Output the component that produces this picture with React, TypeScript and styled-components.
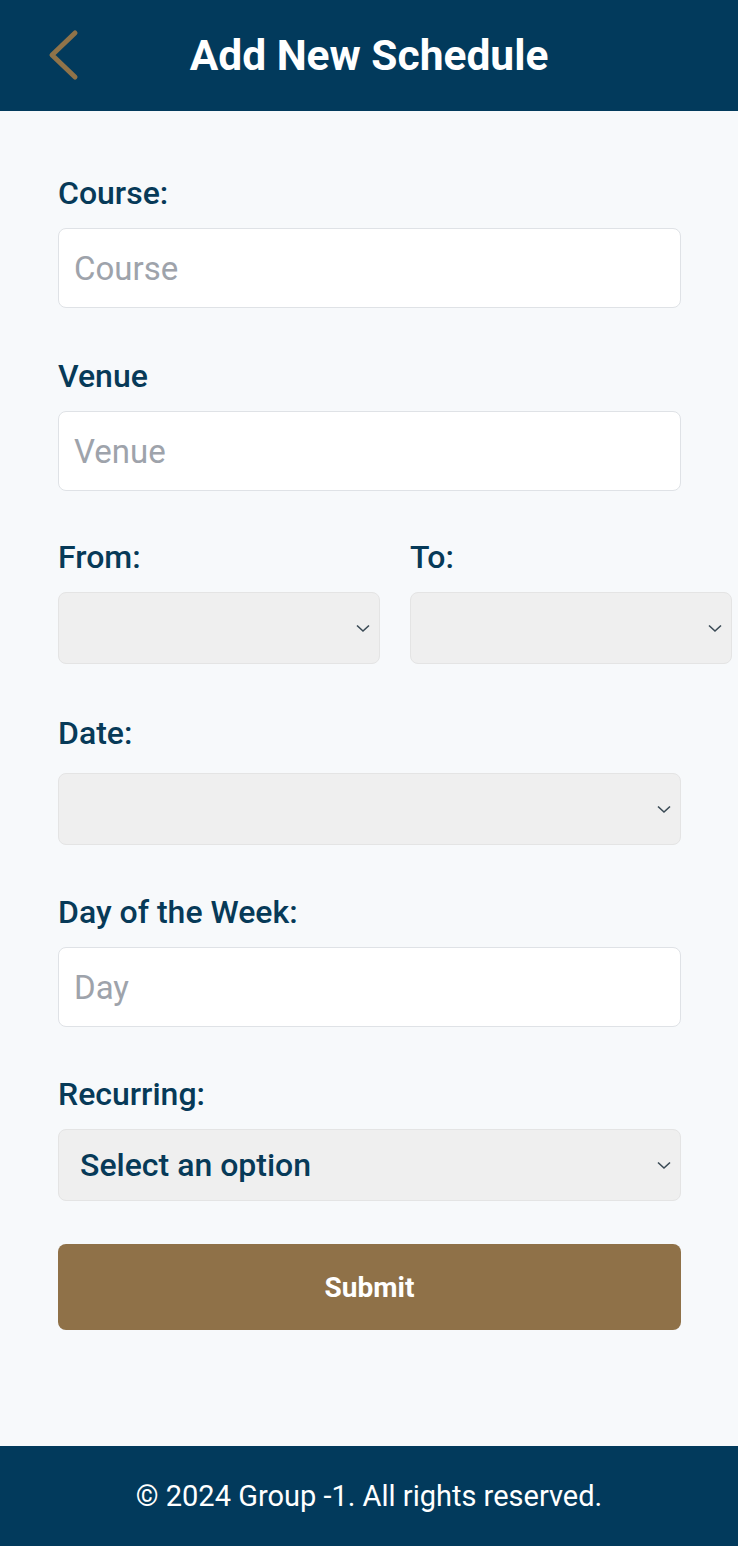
import React from "react";
import styled, { createGlobalStyle } from "styled-components";

const Global = createGlobalStyle`
  * { box-sizing: border-box; }
  html, body { margin: 0; padding: 0; }
  body { font-family: Roboto, "Noto Sans", Arial, sans-serif; background: #f7f9fb; }
`;

const Page = styled.div`
  min-height: 100vh;
  display: flex;
  flex-direction: column;
`;

const Header = styled.header`
  position: relative;
  height: 111px;
  background: #023a5c;
  display: flex;
  align-items: center;
  justify-content: center;
`;

const BackButton = styled.button`
  position: absolute;
  left: 46px;
  top: 28px;
  width: 36px;
  height: 54px;
  padding: 0;
  border: none;
  background: transparent;
  display: flex;
  align-items: center;
  justify-content: center;
`;

const Title = styled.h1`
  margin: 0;
  color: #ffffff;
  font-size: 42.5px;
  font-weight: 700;
`;

const Main = styled.main`
  flex: 1;
  padding: 63px 57px 40px 58px;
  display: flex;
  flex-direction: column;
`;

const Group = styled.div<{ $mb?: number }>`
  display: flex;
  flex-direction: column;
  margin-bottom: ${(p) => p.$mb ?? 49}px;
`;

const Row = styled.div<{ $mb?: number }>`
  display: grid;
  grid-template-columns: 322px 322px;
  column-gap: 30px;
  margin-bottom: ${(p) => p.$mb ?? 49}px;
`;

const Label = styled.label<{ $gap?: number }>`
  color: #073a58;
  font-size: 32px;
  font-weight: 500;
  line-height: 38px;
  margin-bottom: ${(p) => p.$gap ?? 16}px;
`;

const TextInput = styled.input`
  height: 80px;
  width: 100%;
  border: 1px solid #dfe2e6;
  border-radius: 8px;
  background: #ffffff;
  padding: 0 15px;
  font-family: Roboto, Arial, sans-serif;
  font-size: 33px;
  color: #073a58;
  outline: none;
  &::placeholder { color: #9ea3ab; }
`;

const SelectBox = styled.div`
  height: 72px;
  width: 100%;
  border: 1px solid #e4e4e4;
  border-radius: 8px;
  background: #efefef;
  display: flex;
  align-items: center;
  justify-content: space-between;
  padding: 0 8px 0 21px;
`;

const SelectText = styled.span`
  color: #073a58;
  font-size: 32px;
  font-weight: 500;
`;

const Submit = styled.button`
  height: 86px;
  width: 100%;
  border: none;
  border-radius: 8px;
  background: #8f7148;
  color: #ffffff;
  font-family: Roboto, Arial, sans-serif;
  font-size: 28px;
  font-weight: 700;
`;

const Footer = styled.footer`
  height: 100px;
  background: #023a5c;
  display: flex;
  align-items: center;
  justify-content: center;
  color: #ffffff;
  font-size: 29px;
  font-weight: 400;
`;

const Chevron = () => (
  <svg width="16" height="10" viewBox="0 0 16 10">
    <polyline points="2,2.5 8,8 14,2.5" fill="none" stroke="#3a4a55" strokeWidth="1.6" />
  </svg>
);

const Select = ({ text }: { text?: string }) => (
  <SelectBox>
    <SelectText>{text ?? ""}</SelectText>
    <Chevron />
  </SelectBox>
);

export default function App() {
  return (
    <Page>
      <Global />
      <Header>
        <BackButton aria-label="Back">
          <svg width="36" height="54" viewBox="0 0 36 54">
            <polyline points="29,5 6,27 29,49" fill="none" stroke="#8f7349" strokeWidth="5" strokeLinecap="round" strokeLinejoin="round" />
          </svg>
        </BackButton>
        <Title>Add New Schedule</Title>
      </Header>
      <Main>
        <Group $mb={49}>
          <Label>Course:</Label>
          <TextInput placeholder="Course" />
        </Group>
        <Group $mb={47}>
          <Label>Venue</Label>
          <TextInput placeholder="Venue" />
        </Group>
        <Row $mb={50}>
          <Group $mb={0}>
            <Label>From:</Label>
            <Select />
          </Group>
          <Group $mb={0}>
            <Label>To:</Label>
            <Select />
          </Group>
        </Row>
        <Group $mb={48}>
          <Label $gap={21}>Date:</Label>
          <Select />
        </Group>
        <Group $mb={48}>
          <Label>Day of the Week:</Label>
          <TextInput placeholder="Day" />
        </Group>
        <Group $mb={43}>
          <Label>Recurring:</Label>
          <Select text="Select an option" />
        </Group>
        <Submit>Submit</Submit>
      </Main>
      <Footer>© 2024 Group -1. All rights reserved.</Footer>
    </Page>
  );
}
